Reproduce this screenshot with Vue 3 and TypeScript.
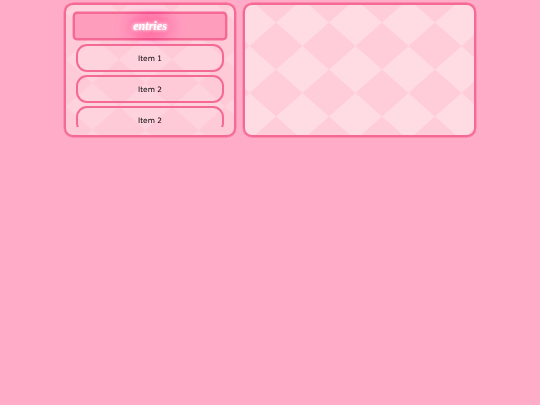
<script setup lang="ts">
const items: string[] = ['Item 1', 'Item 2', 'Item 2']
</script>

<template>
  <div class="page">
    <aside class="panel side">
      <h1 class="title"><span>entries</span></h1>
      <ul class="list">
        <li v-for="(item, i) in items" :key="i" class="item">{{ item }}</li>
      </ul>
    </aside>
    <main class="panel content"></main>
  </div>
</template>

<style>
html, body { margin: 0; background: #ffacc8; }
</style>

<style scoped>
.page {
  width: 412px;
  height: 405px;
  margin: 0 auto;
  padding-top: 3px;
  box-sizing: border-box;
  display: flex;
  align-items: flex-start;
  gap: 7px;
  filter: blur(0.35px);
}
.panel {
  box-sizing: border-box;
  height: 134px;
  border: 2px solid #f56a94;
  box-shadow: 0 0 0 0.4px #f56a94;
  border-radius: 9px;
  background-repeat: repeat;
  background-size: 53px 47px;
}
.side {
  width: 172px;
  padding: 7px 7px 0;
  background-image: url("data:image/svg+xml,%3Csvg xmlns='http://www.w3.org/2000/svg' width='53' height='47'%3E%3Crect width='53' height='47' fill='%23ffcad8'/%3E%3Cpath d='M26.5 0L53 23.5L26.5 47L0 23.5Z' fill='%23ffd3de'/%3E%3C/svg%3E");
  background-position: 0 31px;
}
.content {
  width: 233px;
  background-image: url("data:image/svg+xml,%3Csvg xmlns='http://www.w3.org/2000/svg' width='53' height='47'%3E%3Crect width='53' height='47' fill='%23ffcdda'/%3E%3Cpath d='M26.5 0L53 23.5L26.5 47L0 23.5Z' fill='%23ffdbe4'/%3E%3C/svg%3E");
  background-position: 31px -6px;
}
.title {
  box-sizing: border-box;
  margin: 0;
  height: 28px;
  border: 2px solid #f56a94;
  box-shadow: 0 0 0 0.4px #f56a94;
  border-radius: 4px;
  background: #ff9dbd;
  display: flex;
  align-items: center;
  justify-content: center;
  font: italic bold 12.15px "Liberation Serif", serif;
  color: #fff;
}
.title span {
  text-shadow:
    0 0 3px #fff,
    0 0 5px #fff,
    0 0 12px #ff4f8f,
    0 0 14px #ff4f8f,
    0 0 16px #ff4f8f,
    0 0 20px #ff4f8f;
}
.list {
  list-style: none;
  margin: 4px 3px 0;
  padding: 0;
  height: 83px;
  overflow: hidden;
  display: flex;
  flex-direction: column;
  gap: 3px;
}
.item {
  box-sizing: border-box;
  flex: none;
  height: 28px;
  border: 2px solid #f56a94;
  border-radius: 11px;
  display: flex;
  align-items: center;
  justify-content: center;
  font: 7.4px "DejaVu Sans", sans-serif;
  color: #000;
}
</style>
